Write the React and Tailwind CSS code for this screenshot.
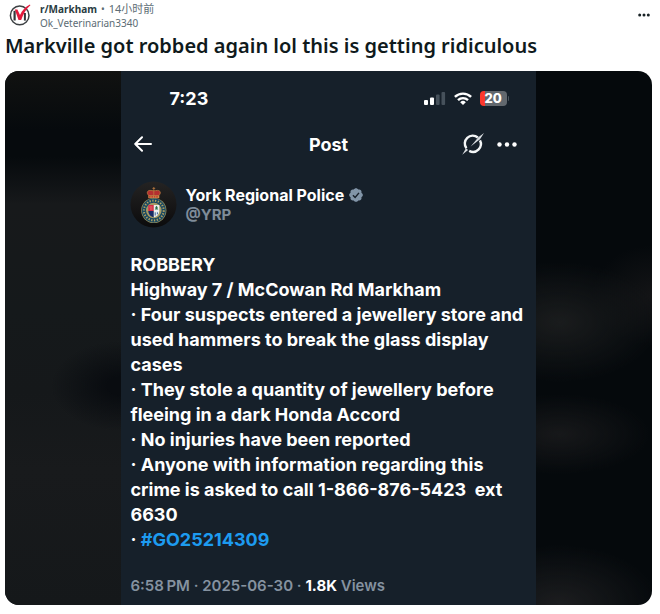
import React from 'react';

const REPORT_LINES = [
    'ROBBERY',
    'Highway 7 / McCowan Rd Markham',
    '· Four suspects entered a jewellery store and',
    'used hammers to break the glass display',
    'cases',
    '· They stole a quantity of jewellery before',
    'fleeing in a dark Honda Accord',
    '· No injuries have been reported',
    '· Anyone with information regarding this',
    'crime is asked to call 1-866-876-5423  ext',
    '6630',
];

function CommunityLogo() {
    return (
        <svg viewBox="0 0 22 22" className="size-[22px] shrink-0" aria-hidden="true">
            <circle cx="10.7" cy="11.4" r="9.3" fill="#fff" stroke="#3c4043" strokeWidth="1.5" />
            <path d="M5.6 16.5V6.8" fill="none" stroke="#34383b" strokeWidth="2.2" />
            <path d="M15.9 16.6V9" fill="none" stroke="#34383b" strokeWidth="2" />
            <path d="M5.8 5.4h2.6l2.6 5.7C13 6.7 16.2 3 20.9.6l.5.7c-4.3 3.6-7.2 8.7-9.2 14.8H9.5z" fill="#e31b3d" />
        </svg>
    );
}

function SignalIcon() {
    return (
        <svg viewBox="0 0 22 14" className="h-3.5 w-[22px]" aria-hidden="true">
            <rect x="0" y="9" width="4" height="5" rx="1" fill="#fff" />
            <rect x="6" y="6.5" width="4" height="7.5" rx="1" fill="#fff" />
            <rect x="12" y="3.5" width="3.6" height="10.5" rx="1" fill="#46515b" />
            <rect x="17.5" y="1" width="3.6" height="13" rx="1" fill="#46515b" />
        </svg>
    );
}

function WifiIcon() {
    return (
        <svg viewBox="0 0 18 13" className="h-[13px] w-[18px]" aria-hidden="true">
            <g fill="none" stroke="#fff" strokeWidth="2.4">
                <path d="M.9 4.9a11.6 11.6 0 0 1 16.2 0" />
                <path d="M4 8.1a7.2 7.2 0 0 1 10 0" />
            </g>
            <path d="M9 13 6.2 10.2a4 4 0 0 1 5.6 0z" fill="#fff" />
        </svg>
    );
}

function Battery() {
    return (
        <div className="flex items-center gap-px">
            <div className="flex h-[15px] w-[27px] items-center justify-center rounded-[4px] bg-[linear-gradient(90deg,#fb382d_20%,#62686e_20%)]">
                <span className="text-[13px] leading-none font-extrabold">20</span>
            </div>
            <span className="h-[5px] w-px rounded-r bg-[#4a545d]" />
        </div>
    );
}

function GrokIcon() {
    return (
        <svg viewBox="0 0 24 24" className="size-6" aria-hidden="true">
            <g fill="none" stroke="#f4f6f7" strokeWidth="2.4">
                <path d="M5.4 16.3A7.9 7.9 0 0 1 16.8 5.5" />
                <path d="M19 8.4A7.9 7.9 0 0 1 8.2 18.9" />
            </g>
            <path d="M1.2 22.8 5 16.2l2.1 1.7zM9.7 14.6 17.3 5.2 23 .9 19 7.2z" fill="#d6dade" />
        </svg>
    );
}

function VerifiedBadge() {
    return (
        <svg viewBox="0 0 22 22" className="size-4 shrink-0" aria-hidden="true">
            <path
                fill="#8295a8"
                d="M20.4 11c0-1.3-.8-2.5-2-3.1.4-1.3.2-2.7-.7-3.6-.9-.9-2.3-1.1-3.6-.7C13.5 2.4 12.3 1.6 11 1.6s-2.5.8-3.1 2c-1.3-.4-2.7-.2-3.6.7-.9.9-1.1 2.3-.7 3.6-1.2.6-2 1.8-2 3.1s.8 2.5 2 3.1c-.4 1.3-.2 2.7.7 3.6.9.9 2.3 1.1 3.6.7.6 1.2 1.8 2 3.1 2s2.5-.8 3.1-2c1.3.4 2.7.2 3.6-.7.9-.9 1.1-2.3.7-3.6 1.2-.6 2-1.8 2-3.1z"
            />
            <path d="m6.8 11.3 3 3 5.3-6.2" fill="none" stroke="#17202a" strokeWidth="2" />
        </svg>
    );
}

function PoliceCrest() {
    return (
        <svg viewBox="0 0 47 47" className="size-[47px] shrink-0" aria-hidden="true">
            <defs>
                <linearGradient id="disc" x1="0" y1="0" x2="0" y2="1">
                    <stop offset="0" stopColor="#242323" />
                    <stop offset="1" stopColor="#0b0b0c" />
                </linearGradient>
            </defs>
            <circle cx="23.5" cy="23.5" r="23" fill="url(#disc)" />
            {/* crown */}
            <path d="M18.8 14.5c-2.6-2.4-1.6-5.1 1.2-5.1 1.5 0 2.6.4 3.8.4s2.3-.4 3.8-.4c2.8 0 3.8 2.7 1.2 5.1z" fill="#b52f30" />
            <path d="M18.8 14.5c-2.6-2.4-1.6-5.1 1.2-5.1 1.5 0 2.6.4 3.8.4s2.3-.4 3.8-.4c2.8 0 3.8 2.7 1.2 5.1M23.8 6v8.5M22.4 7.4h2.8" fill="none" stroke="#bd7a3f" strokeWidth=".8" />
            <path d="M18.3 14.3h11v3h-11z" fill="#d48a48" />
            <path d="M19 15.9h9.6" stroke="#b8302e" strokeWidth="1.1" strokeDasharray="1.6 .8" />
            {/* ring */}
            <circle cx="23.8" cy="29.5" r="12.6" fill="#96905f" />
            <circle cx="23.8" cy="29.5" r="11.9" fill="#194862" />
            <circle cx="23.8" cy="29.5" r="9.9" fill="none" stroke="#b3a05d" strokeWidth="2" strokeDasharray="1.3 1.5" />
            <circle cx="23.8" cy="29.5" r="7.8" fill="#a59a64" />
            {/* shield */}
            <path d="M18.3 24h5.5v6h-5.5z" fill="#d52b47" />
            <path d="M23.8 24h5.5v6h-5.5z" fill="#eee" />
            <path d="M18.3 30h5.5v6.5c-3-1-5.5-3-5.5-6.5z" fill="#172a67" />
            <path d="M23.8 30h5.5c0 3.5-2.5 5.5-5.5 6.5z" fill="#e9edf0" />
            <path d="m26.5 24.7 1.5 2h-.9l1.2 1.8h-3.6l1.2-1.8H25z" fill="#27714c" />
            <path d="M25.2 31.3v3.2M27.4 31.3v2" stroke="#3b619c" strokeWidth="1" />
            <path d="M19.4 26h3M20 28h2.5" stroke="#e79183" strokeWidth=".7" />
        </svg>
    );
}

export default function App() {
    return (
        <main className="bg-white pr-2 pl-[5px] font-['Noto_Sans','Noto_Sans_CJK_SC',sans-serif]">
            <header className="flex items-center pr-0.5 pl-1">
                <CommunityLogo />
                <div className="ml-[9px] pt-0.5 text-[10px] leading-[14px] text-[#5c6c74]">
                    <div className="flex items-center gap-1">
                        <a href="#markham" className="font-bold text-[#2a3c42]">r/Markham</a>
                        <span>•</span>
                        <time className="text-[11px]">14小时前</time>
                    </div>
                    <a href="#author" className="block">Ok_Veterinarian3340</a>
                </div>
                <button type="button" aria-label="Post options" className="ml-auto">
                    <svg viewBox="0 0 12 4" className="h-1 w-3">
                        <g fill="#182225">
                            <circle cx="1.7" cy="2" r="1.5" />
                            <circle cx="6" cy="2" r="1.5" />
                            <circle cx="10.3" cy="2" r="1.5" />
                        </g>
                    </svg>
                </button>
            </header>

            <h1 className="mt-0.5 text-[20px] leading-7 font-semibold text-[#0f1a1c]">
                Markville got robbed again lol this is getting ridiculous
            </h1>

            <article className="mt-[11px] flex overflow-hidden rounded-[14px] bg-[#05090c]">
                <div className="flex-1 bg-[radial-gradient(ellipse_70px_45px_at_100%_59%,#090c10_20%,transparent),linear-gradient(180deg,#111211,#060a0d_11%,#060a0d_16%,#17191b_25%,#15191b_45%,#15181a_60%,#181a1c_75%,#15181a)]" />

                <section className="w-[64%] bg-[#16202a] px-[9px] font-[Inter,sans-serif] text-white">
                    <div className="flex h-[54px] items-center justify-between pr-[18px] pl-[39px]">
                        <span className="text-[18px] font-bold">7:23</span>
                        <div className="flex items-center gap-2">
                            <SignalIcon />
                            <WifiIcon />
                            <Battery />
                        </div>
                    </div>

                    <div className="grid h-[38px] grid-cols-3 items-center pr-2.5 pl-1">
                        <button type="button" aria-label="Back" className="justify-self-start">
                            <svg viewBox="0 0 18 16" className="h-4 w-[18px]" fill="none" stroke="#fff" strokeWidth="2" strokeLinecap="round" strokeLinejoin="round">
                                <path d="M17 8H1.2M8 1.2 1.2 8 8 14.8" />
                            </svg>
                        </button>
                        <h2 className="pl-1.5 text-center text-[18px] font-bold">Post</h2>
                        <div className="flex items-center gap-3 justify-self-end">
                            <button type="button" aria-label="Explain this post">
                                <GrokIcon />
                            </button>
                            <button type="button" aria-label="More">
                                <svg viewBox="0 0 20 5" className="h-[5px] w-5" fill="#fff">
                                    <circle cx="2.5" cy="2.5" r="2.2" />
                                    <circle cx="10" cy="2.5" r="2.2" />
                                    <circle cx="17.5" cy="2.5" r="2.2" />
                                </svg>
                            </button>
                        </div>
                    </div>

                    <div className="mt-[18px] flex items-center gap-2">
                        <PoliceCrest />
                        <div className="text-[16px] leading-[19px] font-bold">
                            <div className="flex items-center gap-1">
                                York Regional Police
                                <VerifiedBadge />
                            </div>
                            <div className="text-[15px] text-[#7f8c99]">@YRP</div>
                        </div>
                    </div>

                    <div className="mt-6 text-[18px] leading-[25px] font-bold whitespace-pre">
                        {REPORT_LINES.map((line) => (
                            <p key={line}>{line}</p>
                        ))}
                        <p>
                            · <a href="#GO25214309" className="text-[#1d9bf0]">#GO25214309</a>
                        </p>
                    </div>

                    <p className="mt-6 pb-[9px] text-[15px] leading-5 font-semibold text-[#8592a0]">
                        6:58{'\u2009'}PM · 2025-06-30 · <span className="font-bold text-white">1.8K</span> Views
                    </p>
                </section>

                <div className="flex-1 bg-[radial-gradient(ellipse_100px_60px_at_20%_47%,#1a1c1d,transparent),radial-gradient(ellipse_90px_40px_at_20%_68%,#17181a,transparent),radial-gradient(ellipse_100px_60px_at_20%_100%,#1c1d1f,transparent),radial-gradient(ellipse_60px_50px_at_100%_42%,#131416,transparent)]" />
            </article>
        </main>
    );
}
